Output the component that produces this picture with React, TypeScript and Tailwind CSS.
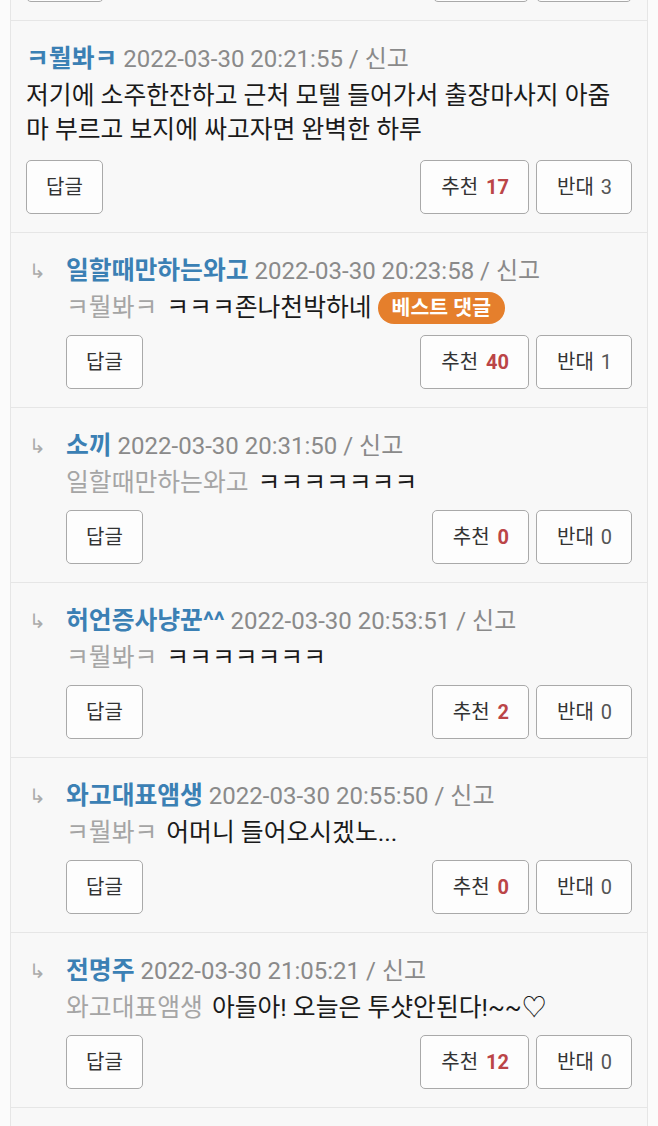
import React from "react";

interface Comment {
  name: string;
  date: string;
  text: string;
  replyTo?: string;
  best?: boolean;
  up: number;
  down: number;
}

const comments: Comment[] = [
  {
    name: "ㅋ뭘봐ㅋ",
    date: "2022-03-30 20:21:55",
    text: "저기에 소주한잔하고 근처 모텔 들어가서 출장마사지 아줌마 부르고 보지에 싸고자면 완벽한 하루",
    up: 17,
    down: 3,
  },
  {
    name: "일할때만하는와고",
    date: "2022-03-30 20:23:58",
    replyTo: "ㅋ뭘봐ㅋ",
    text: "ㅋㅋㅋ존나천박하네",
    best: true,
    up: 40,
    down: 1,
  },
  {
    name: "소끼",
    date: "2022-03-30 20:31:50",
    replyTo: "일할때만하는와고",
    text: "ㅋㅋㅋㅋㅋㅋㅋ",
    up: 0,
    down: 0,
  },
  {
    name: "허언증사냥꾼^^",
    date: "2022-03-30 20:53:51",
    replyTo: "ㅋ뭘봐ㅋ",
    text: "ㅋㅋㅋㅋㅋㅋㅋ",
    up: 2,
    down: 0,
  },
  {
    name: "와고대표앰생",
    date: "2022-03-30 20:55:50",
    replyTo: "ㅋ뭘봐ㅋ",
    text: "어머니 들어오시겠노...",
    up: 0,
    down: 0,
  },
  {
    name: "전명주",
    date: "2022-03-30 21:05:21",
    replyTo: "와고대표앰생",
    text: "아들아! 오늘은 투샷안된다!~~♡",
    up: 12,
    down: 0,
  },
];

const btn =
  "h-[54px] px-[19px] flex items-center justify-center border border-[#a9a9a9] rounded-[5px] bg-[#fdfdfd] text-[20px] text-[#333] leading-none";

const Buttons: React.FC<{ up: number; down: number; gap: string }> = ({ up, down, gap }) => (
  <div className={`flex items-center justify-between ${gap}`}>
    <button className={btn}>답글</button>
    <div className="flex items-center gap-[7px]">
      <button className={`${btn} pl-[20px]`}>
        추천&nbsp;<span className="ml-[3px] font-bold text-[#bb4547]">{up}</span>
      </button>
      <button className={`${btn} pl-[20px]`}>
        반대&nbsp;<span className="ml-[2px] text-[#555]">{down}</span>
      </button>
    </div>
  </div>
);

const CommentRow: React.FC<{ c: Comment }> = ({ c }) => {
  const body = (
    <div className="flex-1 min-w-0">
      <div className="h-[36px] flex items-center whitespace-nowrap">
        <span className="font-bold text-[24.8px] text-[#3b80b4]">{c.name}</span>
        <span className="text-[24px] text-[#8a8a8a]">&nbsp;{c.date} / 신고</span>
      </div>
      <div className="mt-[2px] text-[24.8px] leading-[34px] text-[#1a1a1a] break-all">
        {c.replyTo && <span className="text-[#a5a5a5] mr-[9px]">{c.replyTo}</span>}
        {c.text}
        {c.best && (
          <span className="inline-flex items-center align-middle ml-[6px] -mt-[3px] h-[32px] px-[14px] rounded-full bg-[#e57f2c] text-white font-bold text-[20.5px] leading-none">
            베스트 댓글
          </span>
        )}
      </div>
      <Buttons up={c.up} down={c.down} gap={c.replyTo ? "mt-[10px]" : "mt-[13px]"} />
    </div>
  );

  return (
    <div className="border-t border-[#e6e6e6] px-[15px] pt-[20px] pb-[18px]">
      {c.replyTo ? (
        <div className="flex">
          <div className="w-[40px] h-[36px] flex items-center pl-[3px] text-[20px] text-[#ababab]">↳</div>
          {body}
        </div>
      ) : (
        body
      )}
    </div>
  );
};

export default function App() {
  return (
    <div
      className="min-h-[1126px] bg-[#fbfbfb] px-[10px] overflow-hidden"
      style={{ fontFamily: "Roboto, 'Noto Sans CJK KR', sans-serif" }}
    >
      <div className="bg-[#f8f8f8] border-x border-[#e6e6e6]">
        {/* bottom of the comment above, cut off */}
        <div className="h-[20px] overflow-hidden flex flex-col justify-end px-[15px] pb-[18px]">
          <div className="shrink-0 flex items-center justify-between">
            <div className="w-[78px] h-[54px] border border-[#a9a9a9] rounded-[5px] bg-[#fdfdfd]" />
            <div className="flex gap-[7px]">
              <div className="w-[96px] h-[54px] border border-[#a9a9a9] rounded-[5px] bg-[#fdfdfd]" />
              <div className="w-[96px] h-[54px] border border-[#a9a9a9] rounded-[5px] bg-[#fdfdfd]" />
            </div>
          </div>
        </div>
        {comments.map((c, i) => (
          <CommentRow key={i} c={c} />
        ))}
        <div className="border-t border-[#e6e6e6] h-[40px]" />
      </div>
    </div>
  );
}
